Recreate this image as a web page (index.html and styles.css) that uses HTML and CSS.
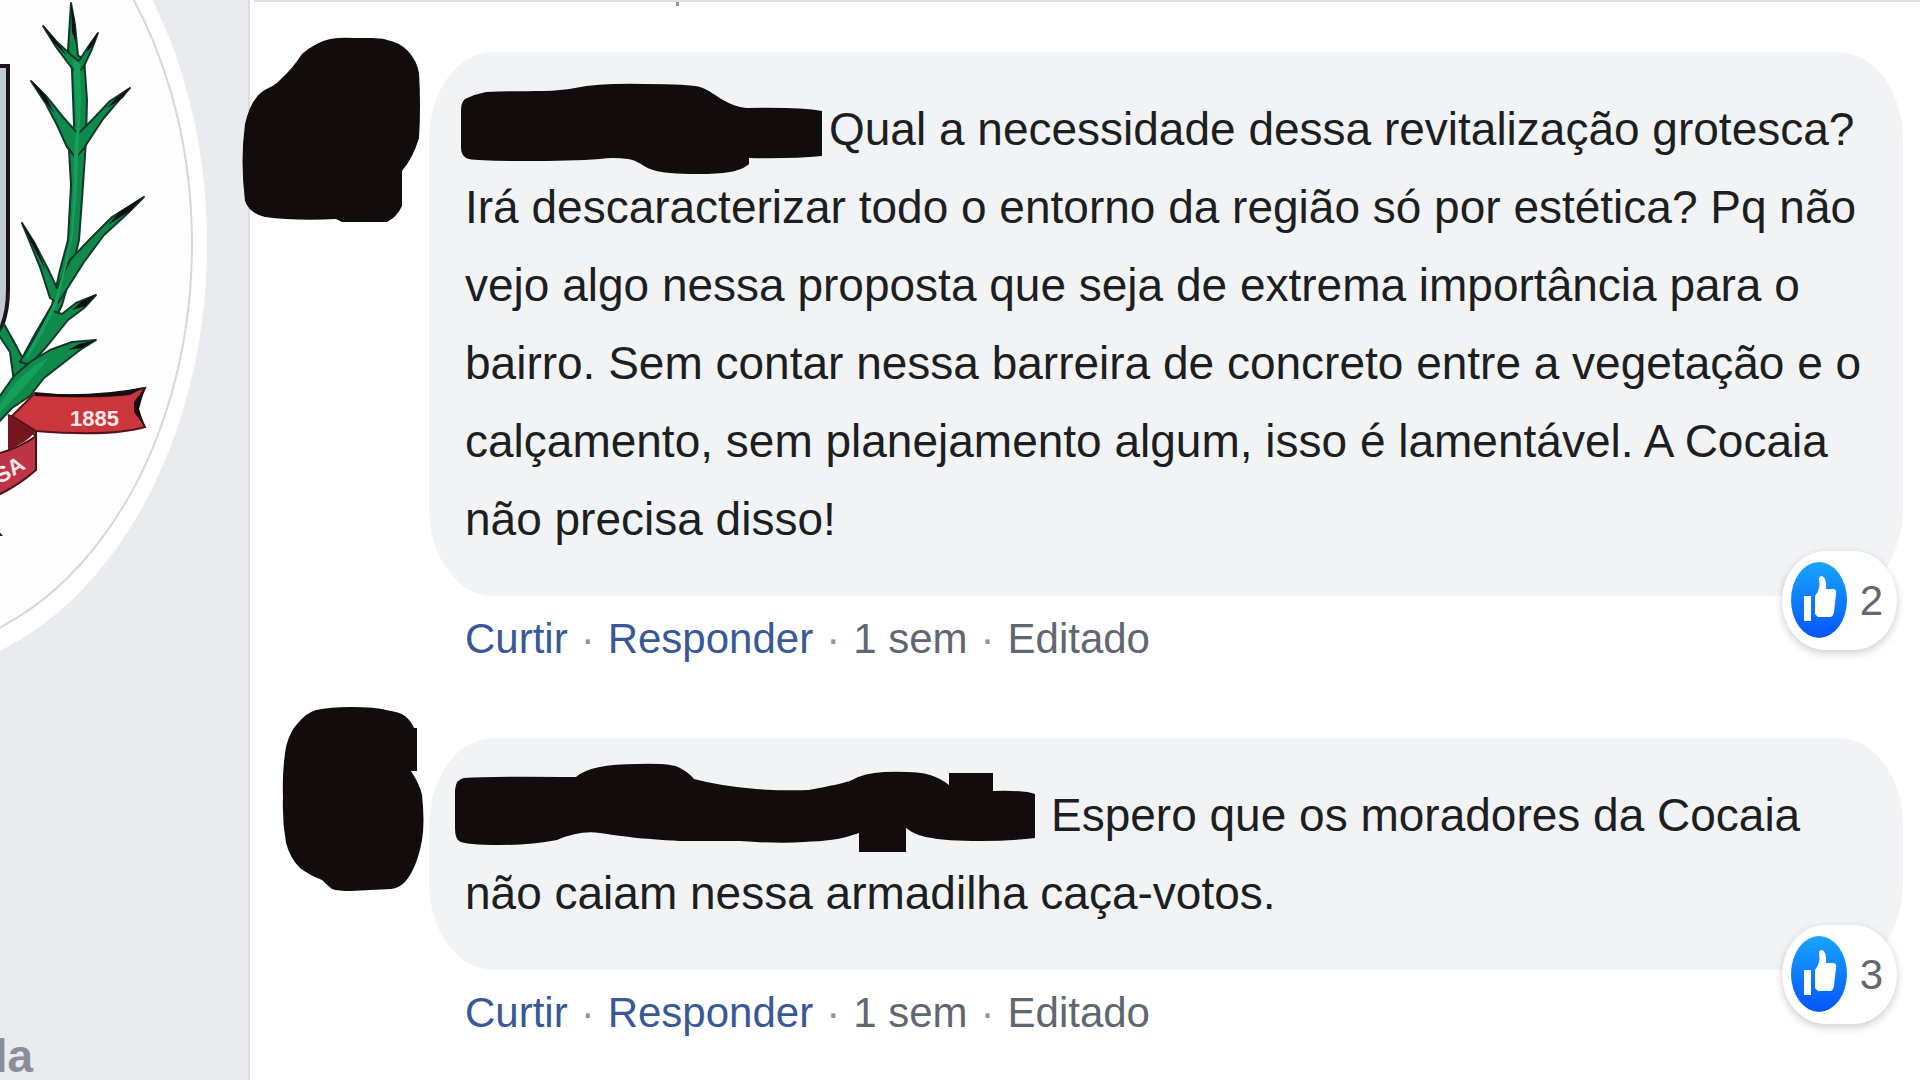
FILE: index.html
```html
<!DOCTYPE html>
<html lang="pt-BR">
<head>
    <meta charset="UTF-8">
    <title>Comentários</title>
    <link rel="stylesheet" href="styles.css">
</head>
<body>
    <div class="page">
        <aside class="sidebar">
            <svg class="emblem" viewBox="0 0 248 660" role="img" aria-label="Brasão">
                <ellipse cx="-105" cy="244" rx="312" ry="432" fill="#fff"/>
                <ellipse cx="-105" cy="244" rx="297" ry="410" fill="#fefefe" stroke="#d5d7df" stroke-width="2"/>
                <!-- escudo -->
                <path d="M-4 66H8V290Q8 310 2 326L-4 334Z" fill="#c3cbd0" stroke="#1c1419" stroke-width="4"/>
                <!-- fita -->
                <path d="M8 415L36 428V470Q18 486 -4 496V454Q20 448 36 436Z" fill="#bd3347" stroke="#451018" stroke-width="2"/>
                <path d="M8 415L36 430Q30 441 8 450Z" fill="#76151d"/>
                <path d="M35 393Q95 400 145 388L136 409L145 427Q110 437 36 431L12 416Z" fill="#cb353c" stroke="#54151a" stroke-width="2"/>
                <path d="M35 393Q95 397 145 387L130 395Q95 399 35 396ZM145 387L134 402L134 412L145 427L139 409Z" fill="#180d0f"/>
                <text class="ribbon-text" x="70" y="426">1885</text>
                <text class="ribbon-text" x="-12" y="492" transform="rotate(-32 -12 492)">ESA</text>
                <path d="M-2 530L3 536H-2Z" fill="#222"/>
                <!-- ramo -->
                <g fill="#0f8a4b" stroke="#12382a" stroke-width="2" stroke-linejoin="round">
                    <path d="M4 324L13 340L22 357L32 350L26 374L14 382L10 352L-2 334Z"/>
                    <path d="M71 3L75 25L78 56L84 58L87 100L86 140L83 185L79 240L72 270L62 305L46 338L30 362L20 362L34 336L52 305L60 270L68 240L71 185L69 150L74 125L72 70L68 50Z"/>
                    <path d="M43 26L56 41L71 55L79 61L88 47L98 33L92 49L83 68L76 73L68 63L56 47Z"/>
                    <path d="M31 81L46 96L63 117L78 134L93 119L110 101L130 88L119 100L103 119L84 148L76 158L67 147L57 125L46 104Z"/>
                    <path d="M22 223L34 242L47 267L57 288L70 260L90 239L112 217L144 197L127 214L104 235L84 262L58 303L50 298L40 267Z"/>
                    <path d="M20 362L36 335L50 310L62 314L76 303L96 295L84 308L68 320L48 345L30 365Z"/>
                    <path d="M-3 400L14 376L30 362L50 350L72 342L96 340L80 350L62 364L44 378L30 396L12 408L-3 424Z"/>
                </g>
                <path d="M73 60L80 64L81 100L79 140L77 185L73 235L66 268L57 305L42 334L28 358L25 358L40 330L54 303L64 268L71 236L74 185L74 150L77 125ZM-3 408L16 382L34 366L48 358L34 376L16 396L-3 416Z" fill="#14a05a"/>
                <g fill="#0b1210">
                    <path d="M43 25L53 42L67 56L58 43ZM31 80L43 99L54 113L46 96ZM130 87L115 99L107 108L123 98ZM144 196L119 212L108 225L130 211ZM21 221L34 248L46 271L36 245ZM96 294L82 301L72 310L86 306ZM96 340L79 344L68 350L82 348ZM71 3L72 32L76 44L75 22ZM98 32L89 45L87 52L94 44Z"/>
                </g>
            </svg>
            <strong class="sidebar-label">la</strong>
        </aside>

        <main class="comments">
            <div class="previous"></div>

            <article class="comment">
                <svg class="avatar" viewBox="250 51 179 200" aria-hidden="true">
                    <path d="M355 37C372 37 382 37 387 39Q399 41 408 50Q417 60 419 72Q421 105 419 137Q413 157 402 170V205Q397 216 387 221H342L336 218Q295 220 265 216Q250 213 245 200Q240 160 245 123Q251 98 263 90C274 84 274 85 281 78Q293 67 302 53Q316 41 330 38Q341 36 355 37Z"/>
                </svg>
                <div class="comment-body">
                    <div class="bubble">
                        <p><svg class="name name-short" viewBox="465 89 364 78" aria-hidden="true">
                            <path d="M465 98Q475 93 486 91C520 89 550 92 575 87Q600 82 644 83Q690 83 700 86C715 91 725 105 747 107Q800 106 822 110V155Q790 158 749 157V163C740 171 724 173 698 173Q665 173 653 169C643 166 638 159 628 158Q612 156 600 158Q570 160 526 160Q480 160 469 158Q461 156 461 147V110Q461 101 465 98Z"/>
                        </svg>Qual a necessidade dessa revitalização grotesca? Irá descaracterizar todo o entorno da região só por estética? Pq não vejo algo nessa proposta que seja de extrema importância para o bairro. Sem contar nessa barreira de concreto entre a vegetação e o calçamento, sem planejamento algum, isso é lamentável. A Cocaia não precisa disso!</p>
                        <button class="reactions" type="button" aria-label="2 curtidas">
                            <svg class="like" viewBox="0 0 55 77" aria-hidden="true">
                                <defs>
                                    <linearGradient id="blue" x1="0" y1="0" x2="0" y2="1">
                                        <stop offset="0" stop-color="#18a5ff"/>
                                        <stop offset="1" stop-color="#0455fa"/>
                                    </linearGradient>
                                </defs>
                                <ellipse cx="28" cy="38" rx="28" ry="38" fill="url(#blue)"/>
                                <path d="M13 34H20V59H13ZM24 34Q30 27 28 17Q28 14 31 14Q36 16 35 27H43Q46 28 45 32L43 50Q42 55 39 55H27L24 52Z" fill="#fff"/>
                            </svg>
                            <span>2</span>
                        </button>
                    </div>
                    <div class="actions">
                        <a href="#">Curtir</a><i>·</i><a href="#">Responder</a><i>·</i><a class="muted" href="#">1 sem</a><i>·</i><a class="muted" href="#">Editado</a>
                    </div>
                </div>
            </article>

            <article class="comment">
                <svg class="avatar" viewBox="250 738 179 200" aria-hidden="true">
                    <path d="M351 707Q376 707 386 710Q400 712 405 716Q411 721 414 728H417V771H411Q420 785 422 795Q425 823 422 840Q417 868 405 882Q399 888 391 889Q370 890 351 891Q338 891 332 889Q327 885 322 880Q309 875 300 868Q290 858 286 843Q282 820 283 797Q282 770 286 747Q290 731 298 723Q306 713 316 710Q330 707 351 707Z"/>
                </svg>
                <div class="comment-body">
                    <div class="bubble">
                        <p><svg class="name name-long" viewBox="465 776 586 78" aria-hidden="true">
                            <path d="M455 790Q456 779 464 778Q490 776 576 777Q590 764 638 764Q672 763 680 768Q688 772 694 779Q720 786 756 789Q785 791 809 790C830 786 845 783 852 780Q864 773 884 772Q918 771 930 775Q940 778 949 785V773H993V791Q1025 790 1035 794V838Q1010 841 981 841Q945 841 932 838Q916 836 906 828V852H859V833C840 840 825 841 804 842Q780 844 740 841H680C640 839 620 836 600 833Q580 830 557 840Q530 845 500 845Q465 845 459 841Q455 838 455 828Z"/>
                        </svg>Espero que os moradores da Cocaia não caiam nessa armadilha caça-votos.</p>
                        <button class="reactions" type="button" aria-label="3 curtidas">
                            <svg class="like" viewBox="0 0 55 77" aria-hidden="true">
                                <ellipse cx="28" cy="38" rx="28" ry="38" fill="url(#blue)"/>
                                <path d="M13 34H20V59H13ZM24 34Q30 27 28 17Q28 14 31 14Q36 16 35 27H43Q46 28 45 32L43 50Q42 55 39 55H27L24 52Z" fill="#fff"/>
                            </svg>
                            <span>3</span>
                        </button>
                    </div>
                    <div class="actions">
                        <a href="#">Curtir</a><i>·</i><a href="#">Responder</a><i>·</i><a class="muted" href="#">1 sem</a><i>·</i><a class="muted" href="#">Editado</a>
                    </div>
                </div>
            </article>
        </main>
    </div>
</body>
</html>
```

FILE: styles.css
```css
* {
    box-sizing: border-box;
}
body {
    margin: 0;
    background: #fff;
    color: #1c1e21;
    font-family: 'Liberation Sans', Arial, sans-serif;
}
.page {
    display: flex;
    min-height: 100vh;
}
.sidebar {
    flex: 0 0 250px;
    display: flex;
    flex-direction: column;
    justify-content: space-between;
    overflow: hidden;
    background: #e9ebee;
    border-right: 2px solid #d9dbdf;
}
.emblem {
    display: block;
    width: 248px;
    height: 660px;
}
.ribbon-text {
    fill: #fbeaea;
    font-size: 22px;
    font-weight: bold;
}
.sidebar-label {
    display: flex;
    justify-content: flex-end;
    width: 33px;
    color: #8a8e99;
    font-size: 46px;
    line-height: 48px;
}
.comments {
    flex: 1;
    min-width: 0;
    padding-right: 17px;
}
.previous {
    height: 52px;
    margin: 0 -17px 0 4px;
    border-top: 2px solid #dddfe2;
}
/* ponta do texto do comentário anterior */
.previous::before {
    content: "";
    display: block;
    width: 3px;
    height: 4px;
    margin-left: 422px;
    background: #8b93c4;
}
.comment {
    display: flex;
    margin-bottom: 32px;
}
.comment:last-child {
    margin-bottom: 0;
}
.avatar {
    flex: 0 0 179px;
    height: 200px;
    overflow: visible;
    fill: #120c0c;
}
.comment-body {
    flex: 1;
    min-width: 0;
}
.bubble {
    position: relative;
    padding: 38px 32px 38px 36px;
    background: #f1f3f5;
    border-radius: 64px / 88px;
}
.bubble p {
    margin: 0;
    font-size: 46px;
    line-height: 78px;
}
.name {
    height: 78px;
    overflow: visible;
    vertical-align: top;
    fill: #120c0c;
}
.name-short {
    width: 364px;
}
.name-long {
    width: 586px;
}
.reactions {
    position: absolute;
    right: 6px;
    bottom: -54px;
    display: flex;
    align-items: center;
    gap: 14px;
    height: 99px;
    padding: 0 14px 0 9px;
    border: none;
    border-radius: 44px / 50px;
    background: #fff;
    box-shadow: 0 3px 8px rgba(0, 0, 0, 0.2);
    color: #65676b;
    font-family: inherit;
    font-size: 42px;
    cursor: pointer;
}
.like {
    width: 55px;
    height: 77px;
    overflow: visible;
}
.actions {
    display: flex;
    padding: 4px 0 0 36px;
    height: 110px;
    color: #90949c;
    font-size: 42px;
    line-height: 78px;
}
.actions a {
    color: #385898;
    text-decoration: none;
}
.actions a:hover {
    text-decoration: underline;
}
.actions .muted {
    color: #616770;
}
.actions i {
    width: 40px;
    font-style: normal;
    text-align: center;
}
```
